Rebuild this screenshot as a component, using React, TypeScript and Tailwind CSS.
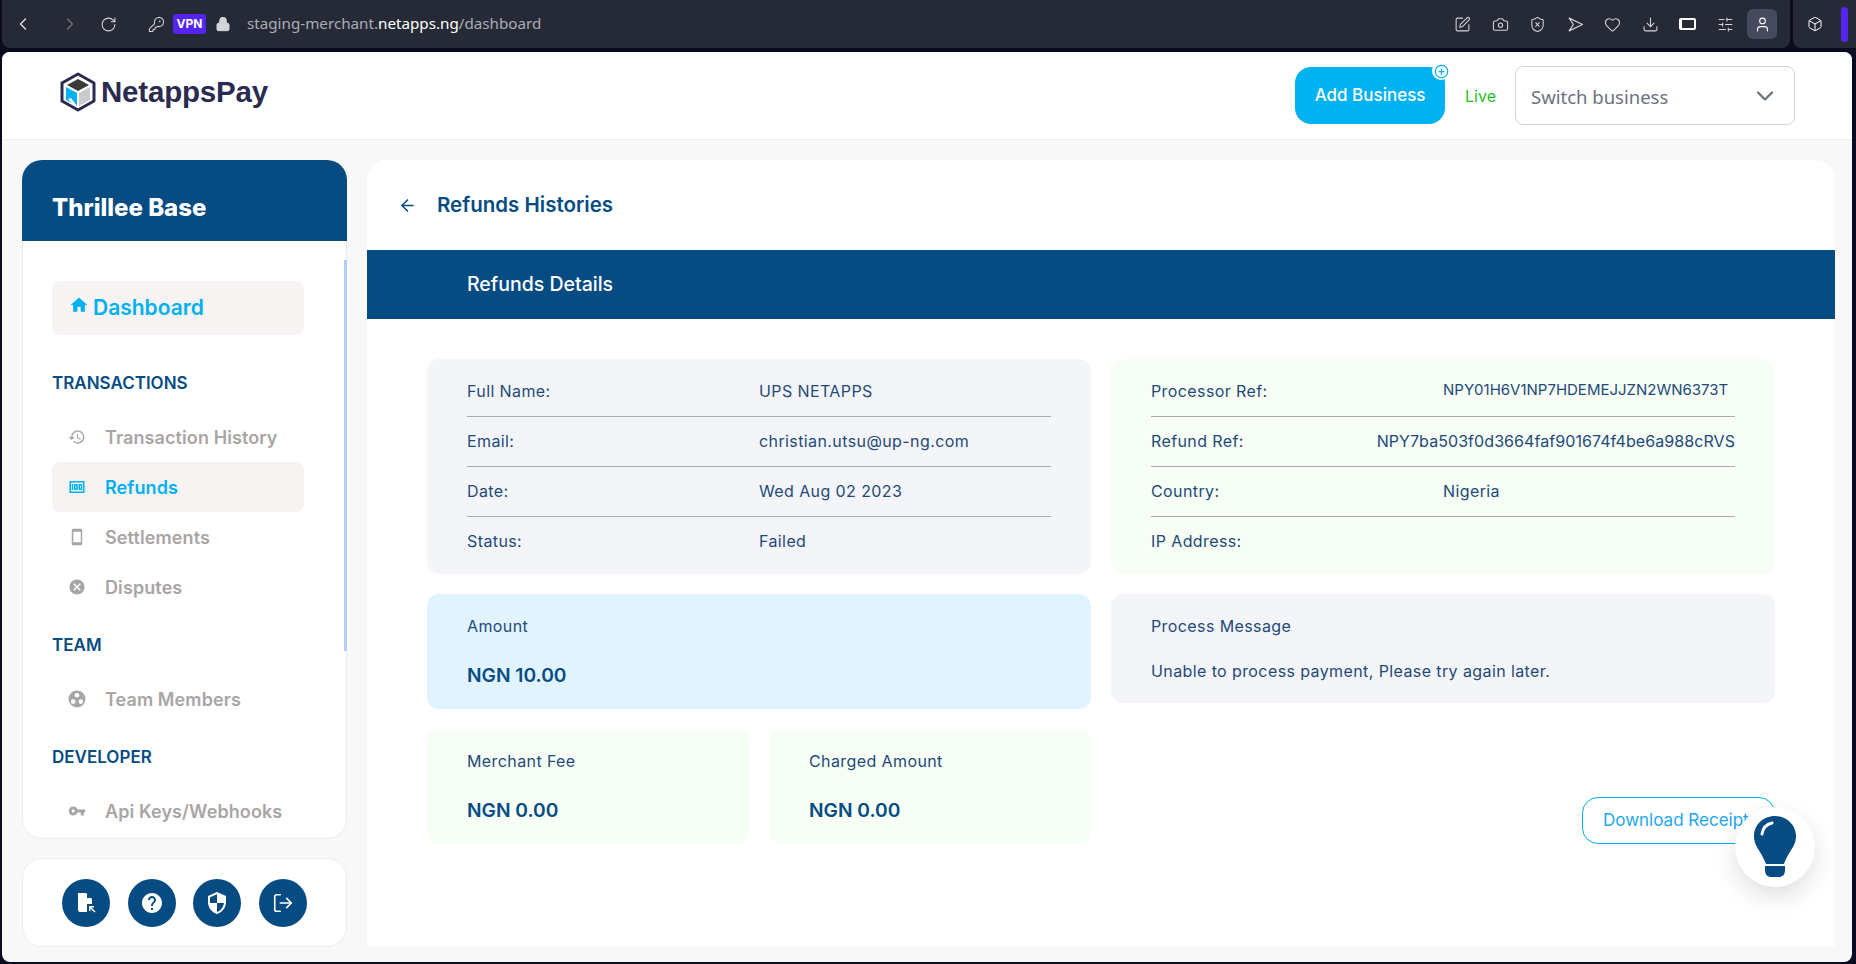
import { ReactNode } from "react";
import {
  ArrowLeft,
  Box,
  Camera,
  ChevronDown,
  ChevronLeft,
  ChevronRight,
  CirclePlus,
  Download,
  Heart,
  KeyRound,
  Lock,
  LogOut,
  RotateCw,
  ShieldX,
  SlidersHorizontal,
  SquarePen,
  User,
} from "lucide-react";
import {
  MdCancel,
  MdHelp,
  MdHistory,
  MdHome,
  MdOutlineMoney,
  MdOutlineSmartphone,
  MdSecurity,
  MdVpnKey,
} from "react-icons/md";

const Logo = () => (
  <svg width="36" height="40" viewBox="0 0 36 40">
    <path d="M18 2 L34 11 V29 L18 38 L2 29 V11 Z" fill="#fff" stroke="#2b2a50" strokeWidth="3" strokeLinejoin="round" />
    <path d="M18 7 L29 13 L18 19 L7 13 Z" fill="#3a3a3c" />
    <path d="M6 15 L17 21 V34 L6 28 Z" fill="#00b2f0" />
    <path d="M19 21 L30 15 V28 L19 34 Z" fill="#c9cbcc" />
    <path d="M11 26 L17 34 H14 L8 27 Z" fill="#fff" />
  </svg>
);

const FileArrow = () => (
  <svg width="22" height="22" viewBox="0 0 22 22" fill="#fff">
    <path d="M3 1 H11 L17 7 V12 H12 V20 H5 Q3 20 3 18 Z" />
    <path d="M12 1.5 L16.5 6 H12 Z" fill="#064c83" />
    <path d="M14 14 H19 V15.5 H16.5 L20.5 19.5 L19.5 20.5 L15.5 16.5 V19 H14 Z" />
  </svg>
);

const Bulb = () => (
  <svg width="42" height="62" viewBox="0 0 42 62">
    <path d="M21 0 C9 0 0 9 0 20 C0 31 7 34 12 48 H30 C35 34 42 31 42 20 C42 9 33 0 21 0 Z" fill="#064c83" />
    <path d="M8 18 C9 12 13 8 18 7" fill="none" stroke="#fff" strokeWidth="3" strokeLinecap="round" />
    <path d="M11 50 H31 V54 C31 59 28 61 25 61 H17 C14 61 11 59 11 54 Z" fill="#064c83" />
  </svg>
);

const TeamIcon = () => (
  <svg width="18" height="18" viewBox="0 0 18 18">
    <circle cx="9" cy="9" r="8.5" fill="currentColor" />
    <circle cx="9" cy="5.2" r="2.3" fill="#fff" />
    <circle cx="5.2" cy="11.6" r="2.3" fill="#fff" />
    <circle cx="12.8" cy="11.6" r="2.3" fill="#fff" />
  </svg>
);

const SendIcon = () => (
  <svg width="17" height="17" viewBox="0 0 24 24" fill="none" stroke="currentColor" strokeWidth="1.6" strokeLinejoin="round">
    <path d="M3 3 L22 12 L3 21 L9 12 Z" />
  </svg>
);

const NavItem = ({ icon, label, active }: { icon: ReactNode; label: string; active?: boolean }) => (
  <div
    className={`flex items-center h-[50px] w-[252px] rounded-lg pl-[16px] gap-[19px] text-[18px] font-semibold tracking-[0.1px] ${
      active ? "bg-[#f7f3f3] text-[#00b0f0]" : "text-[#a9a5a5]"
    }`}
  >
    <span className="w-[18px] flex justify-center text-[18px]">{icon}</span>
    {label}
  </div>
);

const SectionLabel = ({ children, className }: { children: string; className: string }) => (
  <div className={`text-[17px] font-semibold leading-[24px] text-[#064c83] ${className}`}>{children}</div>
);

const Row = ({
  label,
  value,
  last,
  right,
  valueClass,
}: {
  label: string;
  value: string;
  last?: boolean;
  right?: boolean;
  valueClass?: string;
}) => (
  <div className={`flex items-center h-[50px] pb-[2px] whitespace-nowrap ${last ? "" : "border-b border-[#a9abb0]"}`}>
    <span className={right ? "w-[200px]" : "w-[292px] shrink-0"}>{label}</span>
    <span className={`${right ? "ml-auto" : ""} ${valueClass ?? ""}`}>{value}</span>
  </div>
);

const StatCard = ({ label, value, className }: { label: string; value: string; className: string }) => (
  <div className={`rounded-xl h-[115px] pl-[40px] pt-[20px] text-[#1f4a78] ${className}`}>
    <div className="text-[16px] tracking-[0.4px] leading-[24px]">{label}</div>
    <div className="mt-[19px] text-[19.2px] font-semibold leading-[36px] text-[#064c83]">{value}</div>
  </div>
);

const App = () => {
  return (
    <div className="w-[1856px] h-[964px] flex flex-col overflow-hidden bg-[#0a0b1e] font-['Inter',sans-serif]">
      {/* browser bar */}
      <div className="h-[48px] flex gap-[3px] pl-[2px] text-[#d3d5da]">
        <div className="flex-1 flex items-center rounded-b-lg bg-[#262a36] pl-[11px] pr-[13px]">
          <ChevronLeft size={20} strokeWidth={1.5} className="text-[#e4e6ea]" />
          <ChevronRight size={20} strokeWidth={1.5} className="ml-[27px] text-[#6f727b]" />
          <RotateCw size={17} strokeWidth={1.5} className="ml-[20px]" />
          <KeyRound size={17} strokeWidth={1.5} className="ml-[31px]" />
          <span className="ml-[8px] flex h-[20px] w-[33px] items-center justify-center rounded-[3px] bg-[#5424f0] text-[12px] font-bold text-white">
            VPN
          </span>
          <Lock size={16} fill="#d3d5da" strokeWidth={1.5} className="ml-[9px]" />
          <div className="ml-[16px] -mt-[1px] font-['Noto_Sans',sans-serif] text-[15.2px] text-[#a9adb5]">
            staging-merchant.<span className="text-white">netapps.ng</span>/dashboard
          </div>
          <div className="ml-auto flex items-center gap-[20.5px]">
            <SquarePen size={17} strokeWidth={1.5} />
            <Camera size={17} strokeWidth={1.5} />
            <ShieldX size={17} strokeWidth={1.5} />
            <SendIcon />
            <Heart size={17} strokeWidth={1.5} />
            <Download size={17} strokeWidth={1.5} />
            <span className="h-[12px] w-[17px] rounded-[2px] border-2 border-l-[3px] border-white" />
            <SlidersHorizontal size={17} strokeWidth={1.5} />
            <span className="-ml-[7px] flex h-[30px] w-[30px] items-center justify-center rounded-md bg-[#474a5e]">
              <User size={17} strokeWidth={1.5} className="text-white" />
            </span>
          </div>
        </div>
        <div className="w-[63px] flex items-center gap-[18px] rounded-bl-lg bg-[#262a36] pl-[14px]">
          <Box size={16} strokeWidth={1.5} className="shrink-0 text-white" />
          <span className="h-[35px] w-[7px] shrink-0 rounded-sm bg-[#5424f0]" />
        </div>
      </div>

      {/* page */}
      <div className="mt-[4px] ml-[2px] mr-[4px] h-[910px] flex flex-col overflow-hidden rounded-lg bg-[#f8f8f8]">
        <header className="h-[88px] shrink-0 flex items-center bg-white border-b border-[#eeeeee] pl-[58px] pr-[57px]">
          <div className="flex items-center -mt-[7px]">
            <Logo />
            <span className="ml-[5px] text-[29.5px] font-bold tracking-[-0.2px] text-[#2b2a50] font-['Liberation_Sans',sans-serif]">
              NetappsPay
            </span>
          </div>
          <div className="relative ml-auto flex h-[57px] w-[150px] items-center justify-center rounded-2xl bg-[#00b2f0] text-[17px] font-medium text-white">
            Add Business
            <span className="absolute -right-[5px] -top-[5px] flex h-[18px] w-[18px] items-center justify-center rounded-full bg-white text-[#00b2f0]">
              <CirclePlus size={15} strokeWidth={2} />
            </span>
          </div>
          <span className="ml-[20px] mt-[1px] text-[16px] text-[#1fc01f]">Live</span>
          <div className="ml-[19px] flex h-[59px] w-[280px] items-center justify-between rounded-lg border border-[#cfd4dc] pl-[15px] pr-[15px] text-[18.5px] text-[#6b7280] font-['Noto_Sans',sans-serif]">
            <span className="pt-[2px]">Switch business</span>
            <ChevronDown size={28} strokeWidth={2} />
          </div>
        </header>

        <div className="flex flex-1 gap-[20px] pl-[20px] pr-[17px] pt-[20px]">
          {/* sidebar */}
          <aside className="w-[325px] shrink-0 flex flex-col gap-[19px]">
            <div className="relative h-[679px] rounded-[20px] border border-[#ececec] bg-white">
              <div className="-mx-px -mt-px flex h-[81px] items-center rounded-t-[20px] bg-[#064c83] pl-[30px] pt-[14px] text-[24px] font-extrabold text-white">
                Thrillee Base
              </div>
              <span className="absolute -right-px top-[99px] h-[391px] w-[3px] bg-[#b4ccfb]" />
              <div className="pl-[29px] pt-[40px]">
                <div className="flex h-[54px] w-[252px] items-center gap-[4px] rounded-lg bg-[#f7f3f3] pl-[17px] text-[21px] font-semibold text-[#00b0f0]">
                  <MdHome size={20} className="-mt-[6px]" />
                  Dashboard
                </div>
                <SectionLabel className="mt-[36px]">TRANSACTIONS</SectionLabel>
                <div className="mt-[17px]">
                  <NavItem icon={<MdHistory />} label="Transaction History" />
                  <NavItem icon={<MdOutlineMoney />} label="Refunds" active />
                  <NavItem icon={<MdOutlineSmartphone />} label="Settlements" />
                  <NavItem icon={<MdCancel />} label="Disputes" />
                </div>
                <SectionLabel className="mt-[21px]">TEAM</SectionLabel>
                <div className="mt-[17px]">
                  <NavItem icon={<TeamIcon />} label="Team Members" />
                </div>
                <SectionLabel className="mt-[21px]">DEVELOPER</SectionLabel>
                <div className="mt-[17px]">
                  <NavItem icon={<MdVpnKey />} label="Api Keys/Webhooks" />
                </div>
              </div>
            </div>
            <div className="h-[89px] flex items-center gap-[17.5px] rounded-[20px] border border-[#ececec] bg-white pl-[39px]">
              <span className="flex h-[48px] w-[48px] items-center justify-center rounded-full bg-[#064c83]">
                <FileArrow />
              </span>
              <span className="flex h-[48px] w-[48px] items-center justify-center rounded-full bg-[#064c83] text-white">
                <MdHelp size={24} />
              </span>
              <span className="flex h-[48px] w-[48px] items-center justify-center rounded-full bg-[#064c83] text-white">
                <MdSecurity size={24} />
              </span>
              <span className="flex h-[48px] w-[48px] items-center justify-center rounded-full bg-[#064c83] text-white">
                <LogOut size={22} strokeWidth={1.75} />
              </span>
            </div>
          </aside>

          {/* main */}
          <main className="relative h-[787px] flex-1 rounded-t-[20px] rounded-b-sm bg-white">
            <div className="flex h-[90px] items-center gap-[20px] pl-[31px] text-[20.5px] font-semibold text-[#064c83]">
              <ArrowLeft size={19} strokeWidth={2} />
              Refunds Histories
            </div>
            <div className="flex h-[69px] items-center bg-[#064c83] pl-[100px] text-[19.5px] font-medium text-white">
              Refunds Details
            </div>
            <div className="grid grid-cols-2 gap-[20px] pl-[60px] pr-[60px] pt-[40px]">
              <div className="h-[215px] rounded-xl bg-[#f4f5f9] px-[40px] pt-[8px] text-[16px] tracking-[0.4px] text-[#1f4a78]">
                <Row label="Full Name:" value="UPS NETAPPS" />
                <Row label="Email:" value="christian.utsu@up-ng.com" />
                <Row label="Date:" value="Wed Aug 02 2023" />
                <Row label="Status:" value="Failed" last />
              </div>
              <div className="h-[215px] rounded-xl bg-[#f6fef6] px-[40px] pt-[8px] text-[16px] tracking-[0.4px] text-[#1f4a78]">
                <Row label="Processor Ref:" value="NPY01H6V1NP7HDEMEJJZN2WN6373T" valueClass="text-[15px] tracking-normal" />
                <Row label="Refund Ref:" value="NPY7ba503f0d3664faf901674f4be6a988cRVS" right valueClass="tracking-[0.07px]" />
                <Row label="Country:" value="Nigeria" />
                <Row label="IP Address:" value="" last />
              </div>
              <StatCard label="Amount" value="NGN 10.00" className="bg-[#e0f3fe]" />
              <div className="h-[109px] rounded-xl bg-[#f4f5f9] pl-[40px] pt-[20px] text-[16px] tracking-[0.4px] text-[#1f4a78]">
                <div className="leading-[24px]">Process Message</div>
                <div className="mt-[21px] leading-[24px]">Unable to process payment, Please try again later.</div>
              </div>
              <div className="flex gap-[20px]">
                <StatCard label="Merchant Fee" value="NGN 0.00" className="flex-1 bg-[#f6fef6]" />
                <StatCard label="Charged Amount" value="NGN 0.00" className="flex-1 bg-[#f6fef6]" />
              </div>
              <div className="flex items-end justify-end">
                <div className="flex h-[47px] w-[193px] items-center whitespace-nowrap overflow-hidden rounded-2xl border border-[#00b0f0] pl-[20px] text-[17px] text-[#1ea7ee]">
                  Download Receipt
                </div>
              </div>
            </div>
            <span className="absolute left-[1368px] top-[647px] flex h-[80px] w-[80px] items-center justify-center rounded-full bg-white shadow-[0_10px_25px_rgba(0,0,0,0.12)]">
              <Bulb />
            </span>
          </main>
        </div>
      </div>
    </div>
  );
};

export default App;
